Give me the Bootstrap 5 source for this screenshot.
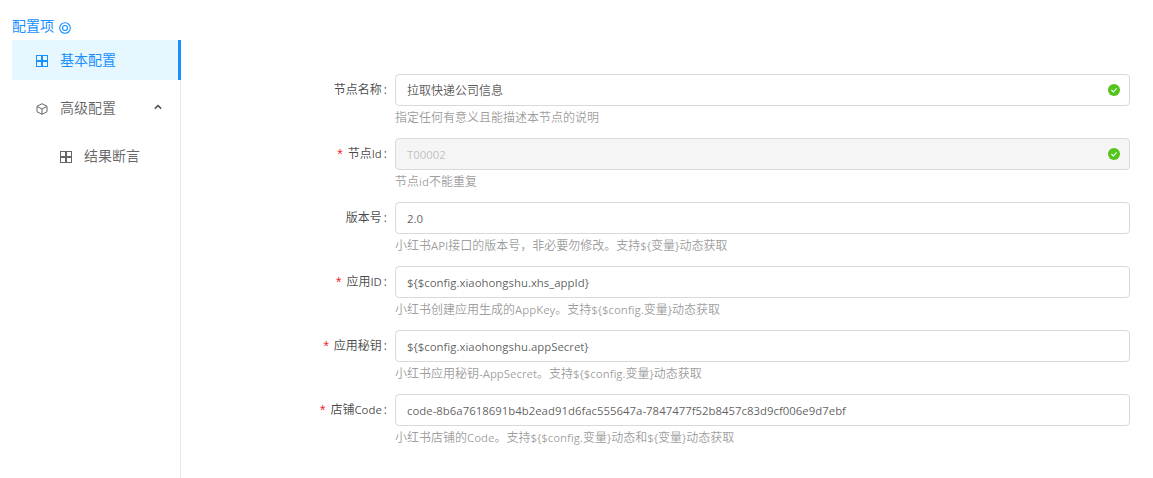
<!DOCTYPE html>
<html lang="zh"><head><meta charset="utf-8"><title>配置项</title>
<link href="https://cdn.jsdelivr.net/npm/bootstrap@5.3.0/dist/css/bootstrap.min.css" rel="stylesheet">
<style>
html,body{height:478px;overflow:hidden;background:#fff}
body{font-family:"Open Sans","Noto Sans CJK SC",sans-serif;font-size:12px;color:rgba(0,0,0,.65)}
.lat{font-size:11.4px}
.shell{padding-left:12px;height:478px}
.side-title{height:40px;padding-top:16px;color:#1890ff;font-size:14px;line-height:19px;margin-right:-30px;white-space:nowrap}
.side-title svg{margin-left:5px;vertical-align:-3px}
.side-wrap{width:169px;flex:none}
.side-menu{border-right:1px solid #e8e8e8;height:438px}
.menu-row{height:40px;font-size:14px;color:rgba(0,0,0,.6);margin-bottom:8px;margin-right:-1px;padding:0 0 2px 24px}
.menu-row svg{flex:none;margin-right:12px;margin-top:3px}
.menu-row.on{background:#e6f7ff;color:#1890ff;border-right:3px solid #1890ff}
.menu-row.sub{padding-left:48px}
.menu-caret{margin-left:auto;margin-right:19px!important;margin-top:0!important}
.form-area{padding-top:74px;padding-right:23px}
.frow{height:64px}
.flabel{width:214px;flex:none;height:32px;line-height:31px;text-align:right;padding-right:5px;color:rgba(0,0,0,.72)}
.colon{margin:0 3px 0 2px}
.req{color:#f5222d;font-family:"Liberation Sans",sans-serif;font-size:14px;line-height:1;margin-right:5px;vertical-align:-1px}
.fbody{flex:1 1 auto;min-width:0}
.finput{height:32px;border:1px solid #d9d9d9;border-radius:4px;padding:1px 9px 0 11px;font-size:12px;line-height:29px;color:rgba(0,0,0,.65)}
.finput.lat{font-size:11.4px}
.finput svg{margin-top:-1px}
.finput.off{background:#f5f5f5;color:rgba(0,0,0,.25)}
.fhelp{color:rgba(0,0,0,.4);font-size:12px;line-height:17px;margin-top:3px}
</style></head><body>
<div class="shell d-flex">
<div class="side-wrap">
<div class="side-title">配置项<svg width="12" height="12" viewBox="0 0 12 12" fill="none" stroke="#1890ff"><circle cx="6" cy="6" r="5.3" stroke-width="1.1"/><circle cx="6" cy="6" r="2.5" stroke-width="1.2"/></svg></div>
<div class="side-menu">
<div class="menu-row on d-flex align-items-center"><svg width="12" height="12" viewBox="0 0 12 12" fill="none" stroke="#1890ff"><rect x=".5" y=".5" width="5" height="5"/><rect x="6.5" y=".5" width="5" height="5"/><rect x=".5" y="6.5" width="5" height="5"/><rect x="6.5" y="6.5" width="5" height="5"/></svg>基本配置</div>
<div class="menu-row d-flex align-items-center"><svg width="12" height="12" viewBox="0 0 12 12" fill="none" stroke="#666"><path d="M6 .7 11 3.3v5.4L6 11.3 1 8.7V3.3zM1.2 3.5 6 6l4.8-2.5M6 6v5.2"/></svg>高级配置<svg class="menu-caret" width="8" height="6" viewBox="0 0 8 6" fill="none" stroke="#555" stroke-width="1.6"><path d="M.8 4.6 4 1.6l3.2 3"/></svg></div>
<div class="menu-row sub d-flex align-items-center"><svg width="12" height="12" viewBox="0 0 12 12" fill="none" stroke="#666"><rect x=".5" y=".5" width="5" height="5"/><rect x="6.5" y=".5" width="5" height="5"/><rect x=".5" y="6.5" width="5" height="5"/><rect x="6.5" y="6.5" width="5" height="5"/></svg>结果断言</div>
</div></div>
<div class="form-area flex-grow-1">
<div class="frow d-flex"><div class="flabel">节点名称<span class="colon">:</span></div><div class="fbody"><div class="finput d-flex justify-content-between align-items-center"><span>拉取快递公司信息</span><svg width="12" height="12" viewBox="0 0 12 12"><circle cx="6" cy="6" r="6" fill="#52c41a"/><path d="M3.4 6 5.3 8l3.3-3.6" fill="none" stroke="#fff" stroke-width="1.1"/></svg></div><div class="fhelp">指定任何有意义且能描述本节点的说明</div></div></div>
<div class="frow d-flex"><div class="flabel"><span class="req">*</span>节点<span class="lat">Id</span><span class="colon">:</span></div><div class="fbody"><div class="finput off d-flex justify-content-between align-items-center"><span class="lat">T00002</span><svg width="12" height="12" viewBox="0 0 12 12"><circle cx="6" cy="6" r="6" fill="#52c41a"/><path d="M3.4 6 5.3 8l3.3-3.6" fill="none" stroke="#fff" stroke-width="1.1"/></svg></div><div class="fhelp">节点<span class="lat">id</span>不能重复</div></div></div>
<div class="frow d-flex"><div class="flabel">版本号<span class="colon">:</span></div><div class="fbody"><div class="finput lat">2.0</div><div class="fhelp">小红书<span class="lat">API</span>接口的版本号，非必要勿修改。支持<span class="lat">${</span>变量<span class="lat">}</span>动态获取</div></div></div>
<div class="frow d-flex"><div class="flabel"><span class="req">*</span>应用<span class="lat">ID</span><span class="colon">:</span></div><div class="fbody"><div class="finput lat">${$config.xiaohongshu.xhs_appId}</div><div class="fhelp">小红书创建应用生成的<span class="lat">AppKey</span>。支持<span class="lat">${$config.</span>变量<span class="lat">}</span>动态获取</div></div></div>
<div class="frow d-flex"><div class="flabel"><span class="req">*</span>应用秘钥<span class="colon">:</span></div><div class="fbody"><div class="finput lat">${$config.xiaohongshu.appSecret}</div><div class="fhelp">小红书应用秘钥<span class="lat">-AppSecret</span>。支持<span class="lat">${$config.</span>变量<span class="lat">}</span>动态获取</div></div></div>
<div class="frow d-flex"><div class="flabel"><span class="req">*</span>店铺<span class="lat">Code</span><span class="colon">:</span></div><div class="fbody"><div class="finput lat">code-8b6a7618691b4b2ead91d6fac555647a-7847477f52b8457c83d9cf006e9d7ebf</div><div class="fhelp">小红书店铺的<span class="lat">Code</span>。支持<span class="lat">${$config.</span>变量<span class="lat">}</span>动态和<span class="lat">${</span>变量<span class="lat">}</span>动态获取</div></div></div>
</div></div>
<script src="https://cdn.jsdelivr.net/npm/bootstrap@5.3.0/dist/js/bootstrap.bundle.min.js"></script>
</body></html>
